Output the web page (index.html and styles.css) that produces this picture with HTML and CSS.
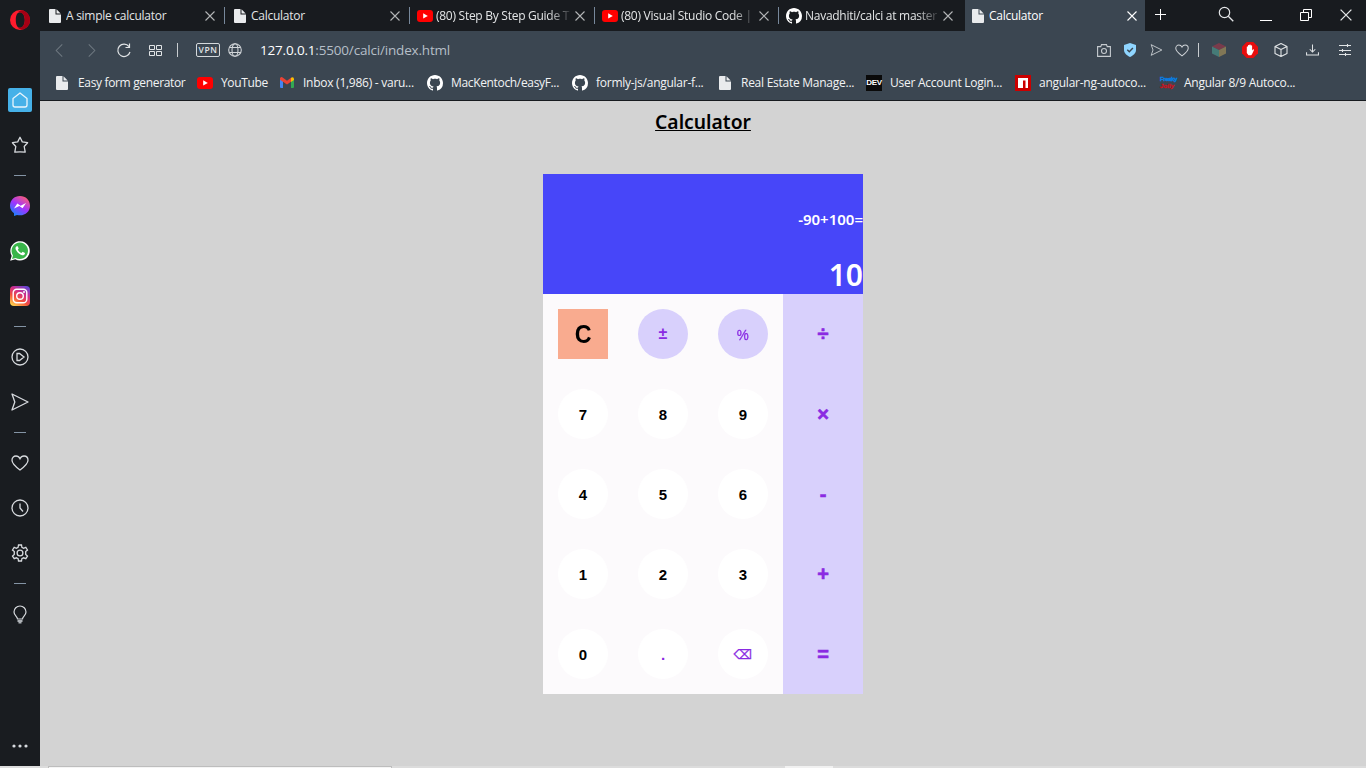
FILE: index.html
```html
<!DOCTYPE html>
<html lang="en">
<head>
<meta charset="utf-8">
<title>Calculator</title>
<link rel="stylesheet" href="styles.css">
</head>
<body>
<svg class="defs" aria-hidden="true">
  <symbol id="file" viewBox="0 0 12 14"><path d="M1 0h5.500v5.500H12V13a1 1 0 0 1-1 1H1a1 1 0 0 1-1-1V1a1 1 0 0 1 1-1z" fill="#e9ebed"/><path d="M7.500.3v4.200h4.200z" fill="#e9ebed"/></symbol>
  <symbol id="yt" viewBox="0 0 16 12"><rect width="16" height="12" rx="3" fill="#f00"/><path d="M6.200 3.300v5.200L10.800 6z" fill="#fff"/></symbol>
  <symbol id="gh" viewBox="0 0 16 16"><path fill="#fff" d="M8 0C3.580 0 0 3.580 0 8c0 3.540 2.290 6.530 5.470 7.590.4.070.55-.17.55-.38 0-.19-.01-.82-.01-1.490-2.010.37-2.530-.49-2.690-.94-.09-.23-.48-.94-.82-1.130-.28-.15-.68-.52-.01-.53.63-.01 1.080.58 1.230.82.72 1.210 1.870.87 2.330.66.07-.52.28-.87.51-1.070-1.780-.2-3.640-.89-3.640-3.950 0-.87.31-1.590.82-2.150-.08-.2-.36-1.020.08-2.120 0 0 .67-.21 2.200.82.64-.18 1.320-.27 2-.27s1.360.09 2 .27c1.530-1.040 2.200-.82 2.200-.82.44 1.100.16 1.920.08 2.120.51.56.82 1.270.82 2.150 0 3.070-1.870 3.750-3.650 3.950.29.25.54.73.54 1.480 0 1.070-.01 1.930-.01 2.200 0 .21.15.46.55.38A8.010 8.010 0 0 0 16 8c0-4.420-3.580-8-8-8z"/></symbol>
  <symbol id="x" viewBox="0 0 10 10"><path d="M.5.5l9 9M9.500.5l-9 9" fill="none" stroke="currentColor" stroke-width="1.100"/></symbol>
  <symbol id="heart" viewBox="0 0 18 16"><path d="M9 15C5 12 1 8.800 1 5.200 1 2.800 2.700 1 5 1c1.800 0 3.200 1 4 2.700C9.800 2 11.200 1 13 1c2.300 0 4 1.800 4 4.200C17 8.800 13 12 9 15z" fill="none" stroke="currentColor" stroke-width="1.300"/></symbol>
  <symbol id="send" viewBox="0 0 18 18"><path d="M1 1l16 8-16 8 2.800-8z" fill="none" stroke="currentColor" stroke-width="1.300" stroke-linejoin="round"/></symbol>
</svg>
<div class="browser">
  <aside class="side">
    <svg class="opera" viewBox="0 0 20 20"><path fill="#ff1b2d" fill-rule="evenodd" d="M10 0a10 10 0 1 0 0 20a10 10 0 1 0 0-20zM10 2.200c3 0 4.800 3.600 4.800 7.800s-1.800 7.800-4.800 7.800S5.800 14.200 5.800 10 7 2.200 10 2.200z"/><path fill="#a70014" d="M13 .5c4.100 1.300 7 5 7 9.500s-2.900 8.200-7 9.500c-2 .3-3.800-.2-5.200-1.900 4.500 1.200 7-2.900 7-7.600S12.300 1.200 7.800 2.400C9.200.7 11 .2 13 .5z"/></svg>
    <svg class="home" viewBox="0 0 24 24"><rect width="24" height="24" rx="2" fill="#46b1e8"/><path d="M5 10.500L12 5l7 5.500v6.500a2 2 0 0 1-2 2H7a2 2 0 0 1-2-2z" fill="none" stroke="#e9f5fc" stroke-width="1.300" stroke-linejoin="round"/></svg>
    <svg class="star" viewBox="0 0 18 18"><path d="M9 1.300l2.300 4.600 5.300.8-3.400 3.800 1 5.600q-2.600-.3-5.200-.3t-5.200.3l1-5.600L1.400 6.700l5.300-.8z" fill="none" stroke="#d7dade" stroke-width="1.300" stroke-linejoin="round"/></svg>
    <i class="rule r1"></i>
    <svg class="app m" viewBox="0 0 20 20"><defs><linearGradient id="mg" x1=".15" y1="1" x2=".8" y2="0"><stop offset="0" stop-color="#0a8cff"/><stop offset=".5" stop-color="#a033ff"/><stop offset="1" stop-color="#ff6070"/></linearGradient></defs><path d="M10 0c5.700 0 10 4.200 10 9.700s-4.300 9.600-10 9.600c-1 0-2-.1-3-.4L4 20v-2.700C1.500 15.500 0 12.900 0 9.700 0 4.200 4.300 0 10 0z" fill="url(#mg)"/><path d="M4 12.600L7.300 7.500l3.300 2.200L16 7l-3.400 5.200-3.300-2.300z" fill="#fff"/></svg>
    <svg class="app w" viewBox="0 0 20 20"><path d="M.2 19.800l1.500-5A9.700 9.700 0 1 1 5.300 18.300z" fill="#fff"/><path d="M2 18l1-3.600A8.200 8.200 0 1 1 5.700 16.900z" fill="#39b54a"/><path d="M6.700 5.300c-1.500.7-1.600 2.500-.4 4.300 1.500 2.400 3.500 4 5.800 4.600 1.500.3 2.900-.6 2.900-2.200l-2.400-1.200-1.100 1.300c-1.700-.7-2.900-1.800-3.700-3.400l.9-1.200-1-2.200z" fill="#fff"/></svg>
    <svg class="app i" viewBox="0 0 20 20"><defs><linearGradient id="ig" x1=".2" y1="1" x2=".8" y2="0"><stop offset="0" stop-color="#ffd04c"/><stop offset=".35" stop-color="#f4503c"/><stop offset=".65" stop-color="#d02e8b"/><stop offset="1" stop-color="#6246d5"/></linearGradient></defs><rect width="20" height="20" rx="4" fill="url(#ig)"/><g fill="none" stroke="#fff" stroke-width="1.400"><rect x="3.200" y="3.200" width="13.600" height="13.600" rx="3.500"/><circle cx="10" cy="10" r="3.300"/></g><circle cx="14" cy="6" r="1" fill="#fff"/></svg>
    <i class="rule r2"></i>
    <svg class="line play" viewBox="0 0 18 18"><circle cx="9" cy="9" r="8"/><path d="M6 5.500h2.500L13 9l-4.500 3.500H6z"/></svg>
    <svg class="line plane"><use href="#send"/></svg>
    <i class="rule r3"></i>
    <svg class="line hrt"><use href="#heart"/></svg>
    <svg class="line clock" viewBox="0 0 18 18"><circle cx="9" cy="9" r="8"/><path d="M9 4.500V9l3 3.500"/></svg>
    <svg class="line gear" viewBox="0 0 18 18"><path d="M7.500 1h3l.4 2.300 1.700 1 2.200-1 1.700 2.700-1.800 1.500v2.900l1.800 1.600-1.700 2.700-2.200-.9-1.700.9-.4 2.300h-3l-.4-2.300-1.700-.9-2.200.9L1.500 12l1.800-1.600V7.500L1.500 6l1.700-2.700 2.200 1 1.700-1z"/><circle cx="9" cy="9" r="2.900"/></svg>
    <i class="rule r4"></i>
    <svg class="bulb" viewBox="0 0 14 20"><path d="M4.500 14c0-2.500-3.500-3.500-3.500-7a6 6 0 0 1 12 0c0 3.500-3.500 4.500-3.500 7z" fill="none" stroke="#d7dade" stroke-width="1.200"/><path d="M4.500 15h5v2H8.500v1.500h-3V17h-1z" fill="#aeb2b6"/></svg>
    <svg class="dots" viewBox="0 0 16 4"><g fill="#d7dade"><circle cx="2" cy="2" r="1.600"/><circle cx="8" cy="2" r="1.600"/><circle cx="14" cy="2" r="1.600"/></g></svg>
  </aside>
  <div class="main">
    <header class="tabs">
      <div class="tab t1"><svg class="fi"><use href="#file"/></svg><span>A simple calculator</span><svg class="cl"><use href="#x"/></svg></div>
      <div class="tab t2"><svg class="fi"><use href="#file"/></svg><span>Calculator</span><svg class="cl"><use href="#x"/></svg></div>
      <div class="tab t3"><svg class="yi"><use href="#yt"/></svg><span class="fade">(80) Step By Step Guide T</span><svg class="cl"><use href="#x"/></svg></div>
      <div class="tab t4"><svg class="yi"><use href="#yt"/></svg><span class="fade">(80) Visual Studio Code |</span><svg class="cl"><use href="#x"/></svg></div>
      <div class="tab t5"><svg class="gi"><use href="#gh"/></svg><span class="fade">Navadhiti/calci at master</span><svg class="cl"><use href="#x"/></svg></div>
      <div class="tab t6"><svg class="fi"><use href="#file"/></svg><span>Calculator</span><svg class="cl"><use href="#x"/></svg></div>
      <svg class="plus" viewBox="0 0 12 12"><path d="M5.500 0v11M0 5.500h11" stroke="#fff" stroke-width="1"/></svg>
      <svg class="find" viewBox="0 0 16 16"><circle cx="6.500" cy="6.500" r="5.200" fill="none" stroke="#e4e6e8" stroke-width="1.200"/><path d="M10.300 10.300l5 5" stroke="#e4e6e8" stroke-width="1.300"/></svg>
      <svg class="mini" viewBox="0 0 12 12"><path d="M0 11.500h12" stroke="#fff"/></svg>
      <svg class="rest" viewBox="0 0 12 12"><path d="M.5 3.500h8v8h-8zM3.500 3.500v-3h8v8h-3" fill="none" stroke="#fff"/></svg>
      <svg class="quit"><use href="#x"/></svg>
    </header>
    <nav class="bar">
      <svg class="back" viewBox="0 0 8 14"><path d="M7.500.5L1 7l6.500 6.500" fill="none" stroke="#6e7880" stroke-width="1.100"/></svg>
      <svg class="fwd" viewBox="0 0 8 14"><path d="M.5.5L7 7 .5 13.500" fill="none" stroke="#6e7880" stroke-width="1.100"/></svg>
      <svg class="reload" viewBox="0 0 14 14"><path d="M12 3.600A6.200 6.200 0 1 0 13 9M12.500.5v4H8.500" fill="none" stroke="#e1e4e6" stroke-width="1.200"/></svg>
      <svg class="grid" viewBox="0 0 13 11"><path d="M.5.5h5v4h-5zM7.500.5h5v4h-5zM.5 6.500h5v4h-5zM7.500 6.500h5v4h-5z" fill="none" stroke="#e1e4e6" stroke-width="1"/></svg>
      <i class="vr v1"></i>
      <span class="vpn">VPN</span>
      <svg class="globe" viewBox="0 0 14 14"><g fill="none" stroke="#d0d4d8" stroke-width="1.100"><circle cx="7" cy="7" r="6.300"/><ellipse cx="7" cy="7" rx="3" ry="6.300"/><path d="M1.300 4.500h11.400M1.300 9.500h11.400"/></g></svg>
      <span class="url"><b>127.0.0.1</b>:5500/calci/index.html</span>
      <div class="tools">
        <svg class="cam" viewBox="0 0 14 13"><path d="M.6 2.600h3.200L4.500.6h5l.7 2h3.200v9.800H.6z" fill="none" stroke="#c6cbcf" stroke-width="1.100"/><circle cx="7" cy="7" r="2.500" fill="none" stroke="#c6cbcf" stroke-width="1.100"/></svg>
        <svg class="shield" viewBox="0 0 12 14"><path d="M6 0l6 2v5c0 3.500-3 5.500-6 7-3-1.500-6-3.500-6-7V2z" fill="#8fd5ff"/><path d="M3.300 6.700l2 2 3.600-3.800" fill="none" stroke="#3b4651" stroke-width="1.400"/></svg>
        <svg class="snd"><use href="#send"/></svg>
        <svg class="ht"><use href="#heart"/></svg>
        <i class="vr v2"></i>
        <svg class="cube1" viewBox="0 0 14 14"><path d="M7 0l7 3.500L7 7 0 3.500z" fill="#793b4b"/><path d="M0 3.500L7 7v7l-7-3.500z" fill="#457b77"/><path d="M14 3.500L7 7v7l7-3.500z" fill="#817756"/></svg>
        <svg class="hand" viewBox="0 0 16 16"><path d="M4.700 0h6.600L16 4.700v6.600L11.300 16H4.700L0 11.300V4.700z" fill="#e70d0d"/><path d="M4.800 6.500V4.700q.7-.8 1.200 0V3.300q.7-.8 1.300 0v-.5q.8-.8 1.400 0v.8q.9-.6 1.400.2v4.700l1-1.200q.9-.1.900.8L10 12.300 9.200 13.300H6.500L4.800 11z" fill="#fff"/></svg>
        <svg class="cube2" viewBox="0 0 14 14"><path d="M7 .6l6 2.900v7L7 13.400 1 10.500v-7zM1 3.500l6 3 6-3M7 6.500v7" fill="none" stroke="#e1e4e6" stroke-width="1.100" stroke-linejoin="round"/></svg>
        <svg class="down" viewBox="0 0 14 12"><path d="M.6 8.500v3h12.800v-3M7 0v8M4 5.200l3 3 3-3" fill="none" stroke="#e1e4e6" stroke-width="1.100"/></svg>
        <svg class="slide" viewBox="0 0 12 12"><path d="M0 1.500h12M0 6.500h12M0 10.500h12M8.500 0v3M3.500 5v3M6.500 9v3" stroke="#e1e4e6" stroke-width="1.100"/></svg>
      </div>
    </nav>
    <nav class="marks">
      <a class="b1"><svg class="fi"><use href="#file"/></svg>Easy form generator</a>
      <a class="b2"><svg class="yi"><use href="#yt"/></svg>YouTube</a>
      <a class="b3"><svg class="gm" viewBox="0 0 14 11"><path d="M0 1.500V10q0 1 1 1h2V4z" fill="#4285f4"/><path d="M14 1.500V10q0 1-1 1h-2V4z" fill="#34a853"/><path d="M0 1.200q1.200-2 3-.5l4 3 4-3v4L7 7.500 0 2.700z" fill="#ea4335"/><path d="M11 .7q2-1.400 3 .7v1.500l-3 2z" fill="#fbbc04"/></svg>Inbox (1,986) - varu...</a>
      <a class="b4"><svg class="gi"><use href="#gh"/></svg>MacKentoch/easyF...</a>
      <a class="b5"><svg class="gi"><use href="#gh"/></svg>formly-js/angular-f...</a>
      <a class="b6"><svg class="fi"><use href="#file"/></svg>Real Estate Manage...</a>
      <a class="b7"><span class="dev">DEV</span>User Account Login...</a>
      <a class="b8"><svg class="npm" viewBox="0 0 16 16"><path d="M0 0h16v16H0z" fill="#cb0000"/><path d="M3 3h10v10h-2.500V5.500H8V13H3z" fill="#fff"/></svg>angular-ng-autoco...</a>
      <a class="b9"><span class="freak"><em>Freaky</em><em>Jolly</em></span>Angular 8/9 Autoco...</a>
    </nav>
    <main class="page">
      <h1>Calculator</h1>
      <section class="calc">
        <div class="screen"><div class="hist">-90+100=</div><div class="out">10</div></div>
        <div class="keys">
          <button class="clear"><span>C</span></button><button class="fn">±</button><button class="fn pct"><span>%</span></button><button class="op">÷</button>
          <button>7</button><button>8</button><button>9</button><button class="op">×</button>
          <button>4</button><button>5</button><button>6</button><button class="op">-</button>
          <button>1</button><button>2</button><button>3</button><button class="op">+</button>
          <button>0</button><button class="pt">.</button><button class="pt del">⌫</button><button class="op">=</button>
        </div>
      </section>
    </main>
  </div>
</div>
<footer class="edge"><i class="e1"></i><i class="e2"></i></footer>
</body>
</html>
```
FILE: styles.css
```css
* { box-sizing: border-box; }
body { margin: 0; width: 1366px; height: 768px; overflow: hidden; background: #d3d3d3; font-family: "Open Sans", "Noto Sans", sans-serif; }
svg { display: block; flex: none; overflow: visible; }
.defs { position: absolute; width: 0; height: 0; }
.browser { display: flex; height: 766px; }
.side { width: 40px; background: #191c20; display: flex; flex-direction: column; align-items: center; flex: none; color: #d7dade; }
.opera { width: 20px; height: 20px; margin-top: 10px; }
.home { width: 24px; height: 24px; margin-top: 58px; }
.star { width: 18px; height: 18px; margin-top: 24px; }
.rule { width: 12px; height: 1px; background: #8494a5; flex: none; }
.r1 { margin-top: 21px; }
.app { width: 20px; height: 20px; }
.m { margin-top: 20px; }
.w { margin-top: 25px; }
.i { margin-top: 25px; }
.r2 { margin-top: 20px; }
.line { width: 18px; height: 18px; fill: none; stroke: #d7dade; stroke-width: 1.3; margin-right: 1px; }
.play { margin-top: 20.5px; }
.plane { margin-top: 27.5px; }
.r3 { margin-top: 21px; }
.hrt { height: 16px; margin-top: 22px; }
.clock { margin-top: 27.5px; }
.gear { margin-top: 27px; }
.r4 { margin-top: 21.5px; }
.bulb { width: 14px; height: 20px; margin-top: 21px; }
.dots { width: 16px; height: 4px; margin-top: 119px; }

.main { flex: 1; min-width: 0; display: flex; flex-direction: column; }
.tabs { height: 31px; background: #181b1f; display: flex; color: #e3e5e6; font-size: 12px; letter-spacing: -.27px; }
.tab { display: flex; align-items: center; position: relative; padding-left: 9px; padding-right: 9.5px; flex: none; }
.tab + .tab:not(.t6)::before { content: ""; position: absolute; left: 0; top: 7px; width: 1px; height: 17px; background: #77889b; }
.tab span { margin-left: 5px; white-space: nowrap; flex: 1; overflow: hidden; }
.tab .fade { -webkit-mask-image: linear-gradient(90deg, #000 82%, transparent); mask-image: linear-gradient(90deg, #000 82%, transparent); }
.t1 { width: 184px; } .t2 { width: 185px; padding-left: 10px; } .t3 { width: 185px; } .t4 { width: 184px; } .t5 { width: 187px; } .t6 { width: 180px; background: #3b4651; color: #fff; }
.t3, .t4, .t5 { padding-left: 8px; }
.t3 span, .t4 span, .t5 span { margin-left: 3px; margin-right: 2px; }
.t5 { padding-right: 12.5px; }
.t6 { padding-left: 7px; padding-right: 8.5px; }
.fi { width: 12px; height: 14px; }
.yi { width: 16px; height: 12px; }
.gi { width: 16px; height: 16px; }
.cl { width: 10px; height: 10px; color: #b3b5b7; }
.t6 .cl { color: #fff; }
.plus { width: 12px; height: 12px; margin: 9px 0 0 10px; }
.find { width: 16px; height: 16px; margin: 6px 0 0 51px; }
.mini { width: 12px; height: 12px; margin: 9px 0 0 26px; }
.rest { width: 12px; height: 12px; margin: 9px 0 0 28px; }
.quit { width: 12px; height: 12px; margin: 9px 0 0 28px; }

.bar { height: 38px; background: #3b4651; display: flex; align-items: center; }
.back, .fwd { width: 8px; height: 13px; }
.back { margin-left: 15px; }
.fwd { margin-left: 25px; }
.reload { width: 14px; height: 14px; margin-left: 21px; }
.grid { width: 13px; height: 11px; margin-left: 18px; }
.vr { width: 1px; height: 14px; background: #c9cdd0; flex: none; }
.v1 { margin-left: 15px; }
.vpn { width: 24px; height: 14px; border: 1px solid #d5d9dc; border-radius: 2px; margin-left: 18px; font-size: 8.5px; line-height: 12px; text-align: center; color: #e1e4e6; letter-spacing: .6px; font-weight: 600; }
.globe { width: 14px; height: 14px; margin-left: 8px; }
.url { margin-left: 18px; font-size: 13.5px; color: #b6bfc8; white-space: nowrap; letter-spacing: -.18px; }
.url b { font-weight: 400; color: #fff; }
.tools { margin-left: auto; display: flex; align-items: center; padding-right: 15px; }
.cam { width: 14px; height: 13px; }
.shield { width: 12px; height: 14px; margin-left: 13px; }
.snd { width: 13px; height: 12px; margin-left: 14px; color: #d0d4d8; }
.ht { width: 14px; height: 13px; margin-left: 12px; color: #d0d4d8; }
.v2 { margin-left: 9px; }
.cube1 { width: 14px; height: 14px; margin-left: 13px; }
.hand { width: 16px; height: 16px; margin-left: 16px; }
.cube2 { width: 14px; height: 14px; margin-left: 16px; }
.down { width: 13px; height: 12px; margin-left: 18px; }
.slide { width: 12px; height: 12px; margin-left: 20px; }

.marks { height: 32px; background: #3b4651; border-bottom: 1px solid #171b1f; display: grid; grid-template-columns: 141px 83px 147px 145px 147px 147px 149px 145px auto; padding-left: 16px; color: #f2f3f4; font-size: 12px; letter-spacing: -.26px; align-items: center; padding-bottom: 4px; }
.marks a { display: flex; align-items: center; white-space: nowrap; gap: 8px; }
.marks .b1, .marks .b6 { gap: 10px; }
.marks .b3 { gap: 9px; }
.marks .b1, .marks .b2, .marks .b4 { letter-spacing: -.34px; }
.gm { width: 14px; height: 11px; }
.dev { width: 16px; height: 16px; background: #0a0a0a; color: #fff; font: bold 8px/16px "Liberation Sans", sans-serif; letter-spacing: -.3px; text-align: center; }
.npm { width: 16px; height: 16px; }
.freak { width: 16px; font: bold 6px/7px "Liberation Sans", sans-serif; color: #087ee4; display: flex; flex-direction: column; letter-spacing: -.4px; -webkit-text-stroke: .4px currentColor; }
.freak em { font-style: normal; }
.freak em + em { color: #c81420; font-style: italic; letter-spacing: .1px; }

.page { flex: 1; display: flex; flex-direction: column; align-items: center; background: #d3d3d3; }
h1 { margin: 8px 0 0; font: 600 19.3px/26px "Noto Sans", sans-serif; text-decoration: underline; color: #000; }
.calc { width: 320px; margin-top: 39px; }
.screen { height: 120px; background: #4746f9; color: #fff; text-align: right; font-family: "Noto Sans", sans-serif; font-weight: 600; }
.hist { padding-top: 34px; font-size: 15px; line-height: 22px; }
.out { padding-top: 24px; font-size: 30px; line-height: 42px; }
.keys { display: grid; grid-template-columns: repeat(4, 80px); grid-auto-rows: 80px; place-items: center; background: linear-gradient(90deg, #fcfafc 240px, #d8d0fc 240px); }
button { width: 50px; height: 50px; padding: 0; border: 0; border-radius: 50%; background: #fff; color: #000; font: bold 15px "Liberation Sans", sans-serif; }
.clear { border-radius: 0; background: #f9ab8f; font-size: 25px; }
.clear span { display: inline-block; transform: scaleX(.93); }
.fn { background: #d8d0fc; color: #8a2be2; font-size: 16px; }
.pct { font-weight: 400; font-size: 15px; -webkit-text-stroke: .3px #8a2be2; }
.pct span { display: inline-block; transform: scaleX(.9); }
.op { background: none; color: #8a2be2; font-size: 20px; -webkit-text-stroke: .6px #8a2be2; }
.pt { color: #8a2be2; }
.del { font-family: "DejaVu Sans", sans-serif; font-weight: 400; font-size: 13px; -webkit-text-stroke: .3px #8a2be2; padding-top: 1px; }
.edge { height: 2px; background: #dcdcdc; display: flex; }
.e1 { width: 344px; margin-left: 48px; border: 1px solid #bdbdbd; border-bottom: 0; background: #f4f4f4; }
.e2 { width: 48px; margin-left: 393px; background: #f1f1f1; }
```
